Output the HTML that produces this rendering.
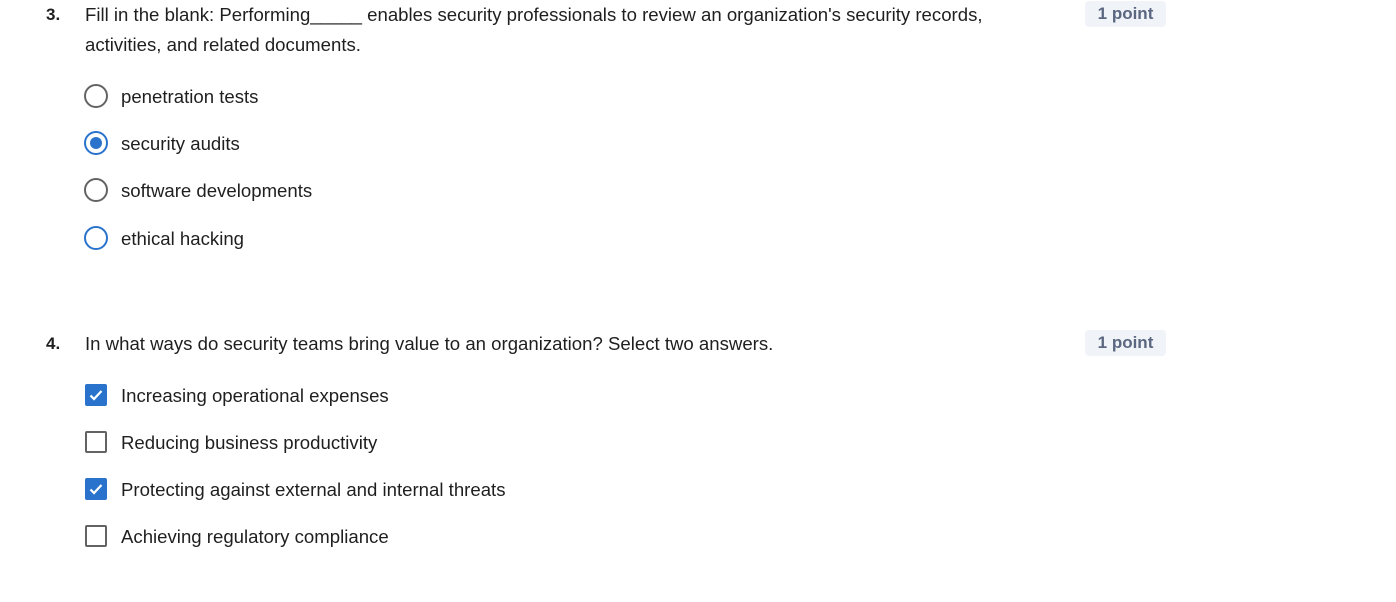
<!DOCTYPE html>
<html><head><meta charset="utf-8"><style>
body{margin:0;width:1396px;height:602px;background:#fff;font-family:"Liberation Sans",sans-serif;color:#1f1f1f;position:relative;overflow:hidden}
.a{position:absolute;font-size:18.6px;line-height:20px;white-space:nowrap}
.num{font-weight:bold;font-size:17px}
.badge{position:absolute;left:1085px;width:81px;height:26px;background:#f0f3f8;border-radius:4px;color:#5b6780;font-weight:bold;font-size:17px;line-height:26px;text-align:center}
.r{position:absolute;left:84px;width:20px;height:20px;border:2px solid #636363;border-radius:50%}
.r.b{border-color:#2a73cc}
.r.on::after{content:"";position:absolute;left:4px;top:4px;width:12px;height:12px;border-radius:50%;background:#2a73cc}
.c{position:absolute;left:85px;width:18px;height:18px;border:2px solid #636363;border-radius:2px}
.c.on{background:#2a73cc;border-color:#2a73cc}
</style></head><body>
<div class="a num" style="left:46px;top:5px">3.</div>
<div class="a" style="left:85px;top:5px">Fill in the blank: Performing_____ enables security professionals to review an organization's security records,</div>
<div class="a" style="left:85px;top:35px">activities, and related documents.</div>
<div class="badge" style="top:1px">1 point</div>

<div class="r" style="top:84px"></div><div class="a" style="left:121px;top:87px">penetration tests</div>
<div class="r b on" style="top:131px"></div><div class="a" style="left:121px;top:134px">security audits</div>
<div class="r" style="top:178px"></div><div class="a" style="left:121px;top:181px">software developments</div>
<div class="r b" style="top:226px"></div><div class="a" style="left:121px;top:229px">ethical hacking</div>

<div class="a num" style="left:46px;top:334px">4.</div>
<div class="a" style="left:85px;top:334px">In what ways do security teams bring value to an organization? Select two answers.</div>
<div class="badge" style="top:330px">1 point</div>

<div class="c on" style="top:384px"><svg width="18" height="18" viewBox="0 0 18 18"><path d="M3.5 9.5l3.5 3.5 7.5-8" fill="none" stroke="#fff" stroke-width="2.2"/></svg></div><div class="a" style="left:121px;top:386px">Increasing operational expenses</div>
<div class="c" style="top:431px"></div><div class="a" style="left:121px;top:433px">Reducing business productivity</div>
<div class="c on" style="top:478px"><svg width="18" height="18" viewBox="0 0 18 18"><path d="M3.5 9.5l3.5 3.5 7.5-8" fill="none" stroke="#fff" stroke-width="2.2"/></svg></div><div class="a" style="left:121px;top:480px">Protecting against external and internal threats</div>
<div class="c" style="top:525px"></div><div class="a" style="left:121px;top:527px">Achieving regulatory compliance</div>
</body></html>
